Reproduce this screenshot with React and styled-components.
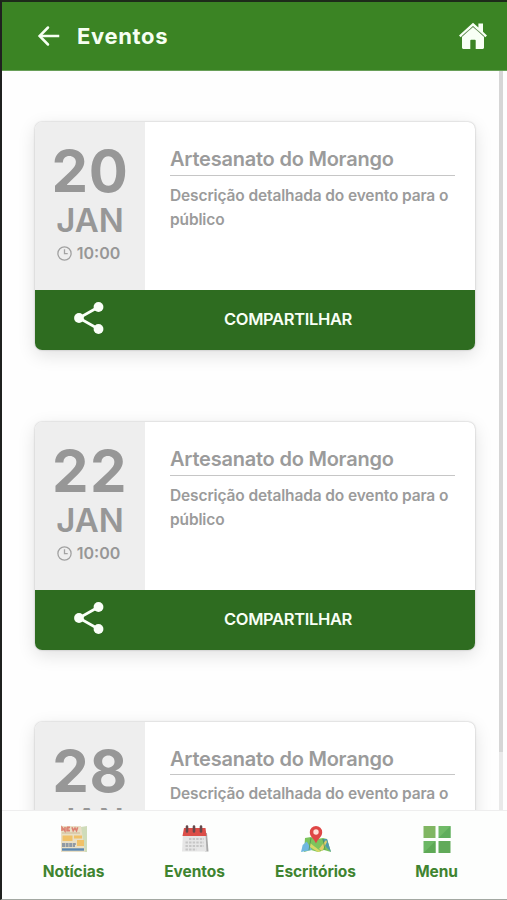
import React from 'react';
import styled, { createGlobalStyle } from 'styled-components';

const GlobalStyle = createGlobalStyle`
  * {
    box-sizing: border-box;
  }
  body {
    margin: 0;
    background: #fff;
    font-family: Inter, 'Liberation Sans', sans-serif;
  }
`;

const Screen = styled.div`
  display: flex;
  flex-direction: column;
  width: 507px;
  height: 900px;
  overflow: hidden;
  border-left: 2px solid #1f211f;
  border-top: 2px solid #1d2b1a;
  border-bottom: 1px solid #a3a8a2;
  background: #fefefe;
`;

const Header = styled.header`
  display: flex;
  align-items: center;
  flex: 0 0 69px;
  padding: 0 20px 0 35px;
  background: #3b8424;
  border-bottom: 1px solid #689f58;
  color: #f6fff2;
`;

const HeaderTitle = styled.h1`
  flex: 1;
  margin: 0 0 1px 16px;
  font-size: 22px;
  line-height: 26px;
  font-weight: 700;
  letter-spacing: 0.65px;
`;

const Body = styled.div`
  display: flex;
  flex: 1;
  min-height: 0;
`;

const List = styled.main`
  flex: 1;
  padding: 51px 24px 0 33px;
  overflow: hidden;
`;

const ScrollTrack = styled.div`
  width: 4px;
  margin-right: 4px;
  background: #e9e9e9;
`;

const ScrollThumb = styled.div`
  height: 681px;
  background: #d6d6d6;
`;

const Card = styled.article`
  height: 228px;
  margin-bottom: 72px;
  border-radius: 7px;
  background: #fff;
  box-shadow: 0 0 2px rgba(0, 0, 0, 0.28), 0 5px 18px rgba(0, 0, 0, 0.12);
  overflow: hidden;
`;

const CardTop = styled.div`
  display: flex;
  height: 168px;
`;

const DateBox = styled.div`
  display: flex;
  flex-direction: column;
  align-items: center;
  width: 110px;
  padding-top: 19px;
  background: #eee;
  color: #979797;
  font-weight: 700;
`;

const Day = styled.div`
  font-size: 58px;
  line-height: 60px;
  letter-spacing: ${props => props.$spacing || '0'};
`;

const Month = styled.div`
  font-size: 33px;
  line-height: 38px;
  font-weight: 600;
`;

const Time = styled.div`
  display: flex;
  align-items: center;
  gap: 5px;
  margin: 4px 3px 0 0;
  font-size: 16px;
  line-height: 20px;
  font-weight: 600;
`;

const Info = styled.div`
  flex: 1;
  padding: 25px 20px 0 25px;
  color: #9b9b9b;
  white-space: nowrap;
`;

const EventTitle = styled.h2`
  height: ${props => (props.$tight ? '28px' : '29px')};
  margin: 0;
  border-bottom: 1px solid #c6c6c6;
  font-size: 20px;
  line-height: 24px;
  font-weight: 600;
  letter-spacing: -0.22px;
`;

const Description = styled.p`
  margin: ${props => (props.$tight ? '7px' : '8px')} 0 0;
  font-size: 15.5px;
  line-height: 24px;
  font-weight: 600;
  letter-spacing: -0.13px;
`;

const ShareBar = styled.div`
  display: flex;
  align-items: center;
  height: 60px;
  padding: 0 0 2px 38px;
  background: #2e6c20;
  color: #f8fff5;
`;

const ShareLabel = styled.span`
  margin-left: 119px;
  font-size: 16.5px;
  line-height: 20px;
  font-weight: 600;
  letter-spacing: -0.33px;
`;

const BottomNav = styled.nav`
  display: grid;
  grid-template-columns: repeat(4, 121px);
  flex: 0 0 89px;
  padding: 14px 0 0 11px;
  background: #fdfefd;
  border-top: 1px solid #eee;
`;

const NavItem = styled.div`
  display: flex;
  flex-direction: column;
  align-items: center;
  gap: 9px;
  color: #3f8430;
  font-size: 15.5px;
  line-height: 20px;
  font-weight: 700;
  letter-spacing: -0.08px;
`;

const ArrowIcon = () => (
  <svg width="24" height="24" viewBox="0 0 24 24" fill="none" stroke="currentColor" strokeWidth="2.5" strokeLinecap="square">
    <path d="M4 12h17" />
    <path d="M11 3.500 2.600 12l8.400 8.500" strokeLinecap="round" strokeLinejoin="miter" />
  </svg>
);

const HomeIcon = () => (
  <svg width="28" height="28" viewBox="0 0 28 28">
    <path d="M14 .8 0 13.400l1.700 1.800L14 4.200l12.300 11 1.700-1.800-4-3.600V1.400h-4.600v4.200L14 .8z" fill="#f8fff5" />
    <path d="M14 5 3 14.800v10.800c0 .8.5 1.300 1.300 1.300h7v-8.400c0-.5.3-.8.8-.8h3.800c.5 0 .8.3.8.8v8.400h7c.8 0 1.300-.5 1.300-1.300V14.800L14 5z" fill="#f8fff5" />
    <path d="M2.500 14.600 14 4.400l11.500 10.200" fill="none" stroke="#7d9a72" strokeWidth="1" />
  </svg>
);

const ClockIcon = () => (
  <svg width="15" height="15" viewBox="0 0 15 15" fill="none" stroke="#a2a2a2" strokeWidth="1.3">
    <circle cx="7.5" cy="7.5" r="6.6" />
    <path d="M7.5 3.3v4.4h3.2" />
  </svg>
);

const ShareIcon = () => (
  <svg width="32" height="34" viewBox="0 0 32 34">
    <path d="M25.5 5 6 16l19.500 11" fill="none" stroke="#fafff8" strokeWidth="2.7" />
    <circle cx="25.500" cy="5" r="4.900" fill="#fafff8" />
    <circle cx="6" cy="16" r="4.900" fill="#fafff8" />
    <circle cx="25.500" cy="27" r="4.900" fill="#fafff8" />
  </svg>
);

const NewsIcon = () => (
  <svg width="28" height="28" viewBox="0 0 28 28">
    <path d="m21 2 6-1v26h-6z" fill="#cfdcba" />
    <path d="M1 1h20l4 26H1z" fill="#e9dfc5" />
    <path d="M2 6V2.500l3 3.500V2M7 2.300v3.500h3M7 2.300h3M7 4h2.500M12 2.300l1.200 3.500L15 3l1.500 2.800 1.200-3.500" fill="none" stroke="#dc8272" strokeWidth="1.600" />
    <path d="M2 8h18" stroke="#cdbb94" strokeWidth="1" />
    <path d="M2.500 10.500h10V16h-10zM14 10.500h8v3h-8zM17 15h7v6h-7z" fill="#f0c168" />
    <path d="M2 19h14M2 21h13" stroke="#73849b" strokeWidth="1.700" strokeDasharray="3 .6" />
    <path d="M2 24.500h22" stroke="#5b87b0" strokeWidth="2.400" />
  </svg>
);

const CalendarIcon = () => (
  <svg width="28" height="28" viewBox="0 0 28 28">
    <path d="M24 8h2l1.500 18.500H24z" fill="#aaa" />
    <path d="M2 8h22.500l1 18.500H1z" fill="#e6e6e6" />
    <path d="M3 3h21.500l1 8H1.500z" fill="#dc4e48" />
    <g fill="none" stroke="#c6c6c6" strokeWidth="2.200" strokeDasharray="2.400 1.200">
      <path d="M8 14h15" />
      <path d="M4.500 17.500H23" />
      <path d="M4.500 21H23" />
      <path d="M4.500 24.500h11" />
    </g>
    <path d="M6 1.500v5M13 1.500v5M20 1.500v5" stroke="#66484a" strokeWidth="2.600" strokeLinecap="round" />
  </svg>
);

const MapIcon = () => (
  <svg width="30" height="28" viewBox="0 0 30 28">
    <path d="m4 13 6-1 6 2 6-1 4 1 4 13-7-2-6 2-7-2-7 2z" fill="#7cc45d" />
    <path d="m1.700 20 4-3.500 5.300 8.500L0 27z" fill="#70b7df" />
    <path d="m9 18 11 8.500-3 .5-8-5z" fill="#d7d867" />
    <path d="m21 14 5 0 4 13-5-5z" fill="#4e9aac" />
    <path d="m18 24 7-9 1 2-5 9" fill="#e3ce69" />
    <path d="m10 13-2 12M22 14l2 11" stroke="#52964b" strokeWidth=".8" />
    <path d="M15 18.500C13.500 14 8.800 12 8.800 7.200a6.200 6.200 0 0 1 12.400 0c0 4.800-4.700 6.800-6.200 11.300z" fill="#df4746" />
    <circle cx="15" cy="7" r="2.700" fill="#ffe0d9" />
  </svg>
);

const MenuIcon = () => (
  <svg width="28" height="28" viewBox="0 0 28 28">
    <path d="M.5 1h12v12H.500z" fill="#80b662" />
    <path d="M15.500 1h12v12h-12z" fill="#70ba68" />
    <path d="M27.500 1v12h-12z" fill="#5fad5d" />
    <path d="M.5 16h12v12H.500z" fill="#6bb764" />
    <path d="M12.500 16v12H.500z" fill="#5ea956" />
    <path d="M15.500 16h12v12h-12z" fill="#61aa59" />
  </svg>
);

const events = [
  { day: '20', spacing: '0.6px' },
  { day: '22', spacing: '1.5px' },
  { day: '28', spacing: '0.6px', tight: true },
];

const EventCard = ({ event }) => (
  <Card>
    <CardTop>
      <DateBox>
        <Day $spacing={event.spacing}>{event.day}</Day>
        <Month>JAN</Month>
        <Time>
          <ClockIcon />
          10:00
        </Time>
      </DateBox>
      <Info>
        <EventTitle $tight={event.tight}>Artesanato do Morango</EventTitle>
        <Description $tight={event.tight}>
          Descrição detalhada do evento para o
          <br />
          público
        </Description>
      </Info>
    </CardTop>
    <ShareBar>
      <ShareIcon />
      <ShareLabel>COMPARTILHAR</ShareLabel>
    </ShareBar>
  </Card>
);

export default function App() {
  return (
    <Screen>
      <GlobalStyle />
      <Header>
        <ArrowIcon />
        <HeaderTitle>Eventos</HeaderTitle>
        <HomeIcon />
      </Header>
      <Body>
        <List>
          {events.map(event => (
            <EventCard key={event.day} event={event} />
          ))}
        </List>
        <ScrollTrack>
          <ScrollThumb />
        </ScrollTrack>
      </Body>
      <BottomNav>
        <NavItem>
          <NewsIcon />
          Notícias
        </NavItem>
        <NavItem>
          <CalendarIcon />
          Eventos
        </NavItem>
        <NavItem>
          <MapIcon />
          Escritórios
        </NavItem>
        <NavItem>
          <MenuIcon />
          Menu
        </NavItem>
      </BottomNav>
    </Screen>
  );
}
